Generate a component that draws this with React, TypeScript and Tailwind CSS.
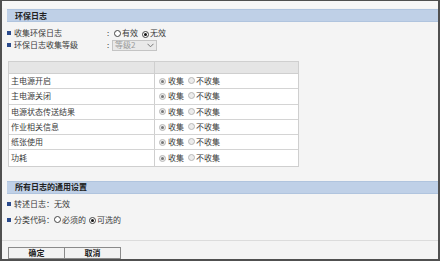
import React from "react";

const font = { fontFamily: '"Noto Sans CJK SC", "Noto Sans", sans-serif' };

function Radio({ checked, dim }: { checked?: boolean; dim?: boolean }) {
  return (
    <span
      className={
        "inline-flex items-center justify-center w-[7px] h-[7px] rounded-full border shrink-0 " +
        (dim ? "border-[#b8b8b8] bg-[#ececec]" : "border-[#444] bg-white")
      }
    >
      {checked ? (
        <span className={"w-[3px] h-[3px] rounded-full " + (dim ? "bg-[#777]" : "bg-[#111]")} />
      ) : null}
    </span>
  );
}

function Bullet() {
  return <span className="inline-block w-[4px] h-[4px] bg-[#2a4a8c] shrink-0" />;
}

function SectionHeader({ title }: { title: string }) {
  return (
    <div className="ml-[5px] h-[13px] bg-[#bfd0e7] border-t border-b border-[#b0c4de] flex items-center pl-[8px]">
      <span className="text-[8px] font-bold text-[#222] leading-none">{title}</span>
    </div>
  );
}

const rows = ["主电源开启", "主电源关闭", "电源状态传送结果", "作业相关信息", "纸张使用", "功耗"];

export default function App() {
  return (
    <div className="w-[440px] h-[263px] bg-white" style={font}>
      <div className="w-[440px] h-[261px] border-t border-l-2 border-r-2 border-b-2 border-[#505050] bg-[#f4f4f4] flex flex-col text-[8px] text-[#3a3a3a] leading-none">
        <div className="h-[7px] bg-[#f7f7f7] mb-[1px]" />
        <SectionHeader title="环保日志" />
        <div className="flex items-center h-[12px] mt-[5px] pl-[5px]">
          <Bullet />
          <span className="ml-[3px] w-[93px]">收集环保日志</span>
          <span className="w-[7px]">:</span>
          <Radio checked={false} />
          <span className="ml-[1px]">有效</span>
          <span className="ml-[4px]"><Radio checked /></span>
          <span className="ml-[1px]">无效</span>
        </div>
        <div className="flex items-center h-[12px] pl-[5px]">
          <Bullet />
          <span className="ml-[3px] w-[93px]">环保日志收集等级</span>
          <span className="w-[5px]">:</span>
          <div className="w-[45px] h-[11px] border border-[#c4c4c4] bg-[#e9e9e9] flex items-center justify-between px-[2px] text-[#9a9a9a]">
            <span>等级2</span>
            <svg width="7" height="5" viewBox="0 0 7 5">
              <path d="M0.5 0.8 L3.5 3.8 L6.5 0.8" fill="none" stroke="#777" strokeWidth="1" />
            </svg>
          </div>
        </div>
        <div className="ml-[6px] mt-[10px] w-[291px] border border-[#cfcfcf] bg-white">
          <div className="flex h-[12px] bg-[#e5e5e5] border-b border-[#cfcfcf]">
            <div className="w-[146px] border-r border-[#cfcfcf]" />
            <div className="flex-1" />
          </div>
          {rows.map((r, i) => (
            <div
              key={r}
              className={"flex h-[15.3px] items-center " + (i < rows.length - 1 ? "border-b border-[#d4d4d4]" : "")}
            >
              <div className="w-[146px] h-full flex items-center pl-[2px] border-r border-[#cfcfcf]">{r}</div>
              <div className="flex items-center pl-[4px]">
                <Radio checked dim />
                <span className="ml-[2px]">收集</span>
                <span className="ml-[4px]"><Radio dim /></span>
                <span className="ml-[1px]">不收集</span>
              </div>
            </div>
          ))}
        </div>
        <div className="mt-[14px]">
          <SectionHeader title="所有日志的通用设置" />
        </div>
        <div className="flex items-center h-[12px] mt-[4px] pl-[5px]">
          <Bullet />
          <span className="ml-[3px]">转述日志：无效</span>
        </div>
        <div className="flex items-center h-[12px] mt-[4px] pl-[5px]">
          <Bullet />
          <span className="ml-[3px]">分类代码：</span>
          <Radio />
          <span className="ml-[1px]">必须的</span>
          <span className="ml-[3px]"><Radio checked /></span>
          <span className="ml-[1px]">可选的</span>
        </div>
        <div className="flex-1" />
        <div className="border-t border-[#dcdcdc]" />
        <div className="flex pl-[6px] pt-[6px]">
          <button className="w-[57px] h-[12px] border border-[#8a8a8a] bg-[#f2f2f2] text-[8px] font-bold text-[#222] leading-none flex items-center justify-center">确定</button>
          <button className="w-[56px] h-[12px] border border-l-0 border-[#8a8a8a] bg-[#f2f2f2] text-[8px] font-bold text-[#222] leading-none flex items-center justify-center">取消</button>
        </div>
      </div>
    </div>
  );
}
